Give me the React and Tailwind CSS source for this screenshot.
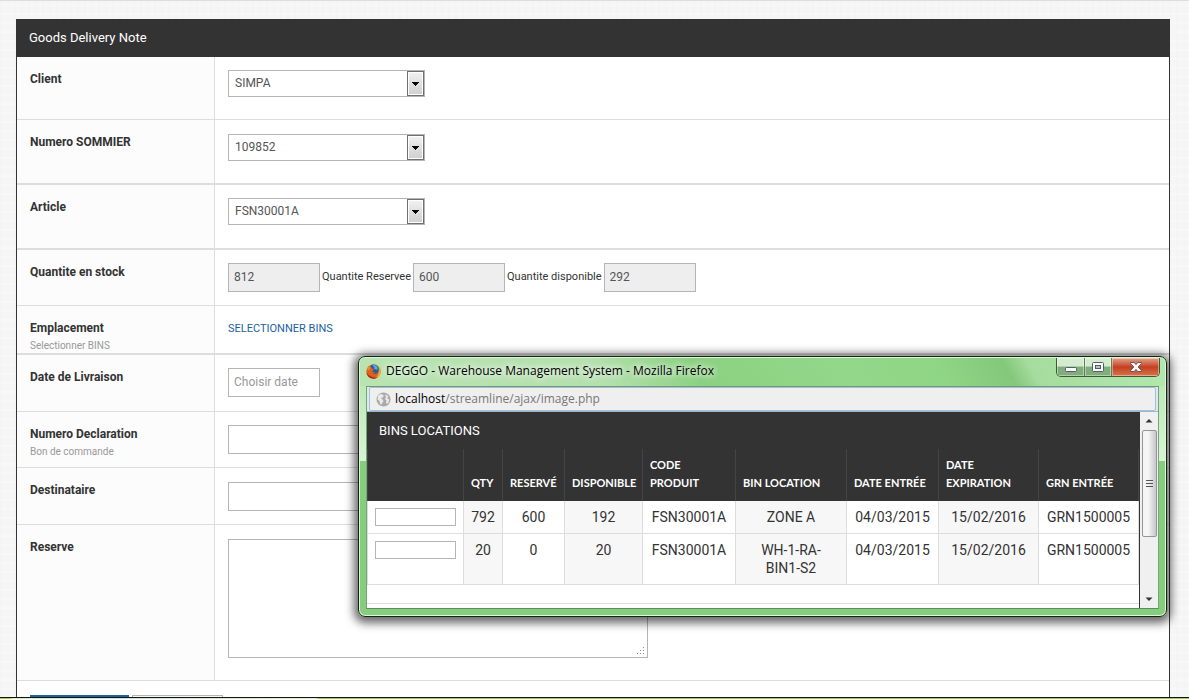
import React, { useState } from 'react';

const STOCK = [
  { qty: 792, reserved: 600, available: 192, code: 'FSN30001A', bin: 'ZONE A', entry: '04/03/2015', expiry: '15/02/2016', grn: 'GRN1500005' },
  { qty: 20, reserved: 0, available: 20, code: 'FSN30001A', bin: 'WH-1-RA-BIN1-S2', entry: '04/03/2015', expiry: '15/02/2016', grn: 'GRN1500005' },
];

const fieldBox = 'border border-[#b5b5b5] pb-[2px] text-[12px] text-[#555] outline-none placeholder:text-[#999]';

// One line of the form: label column on the left, control on the right.
function Row({ id, label, hint, rule = 'border-b', pad = 'py-[13px]', children }) {
  return (
    <div className={`flex border-[#dddddd] ${rule}`}>
      <div className="w-[198px] shrink-0 border-r border-[#dddddd] bg-[#fcfcfc] pl-[13px] pt-3">
        <label htmlFor={id} className="block text-[12px] leading-5 font-bold text-[#333]">{label}</label>
        {hint && <span className="block text-[10px] leading-[15px] text-[#999]">{hint}</span>}
      </div>
      <div className={`min-w-0 flex-1 px-[13px] ${pad}`}>{children}</div>
    </div>
  );
}

function Select({ id, options }) {
  return (
    <div className="relative w-[197px]">
      <select id={id} className={`block h-[27px] w-full appearance-none bg-white pl-[6px] ${fieldBox}`}>
        {options.map((o) => <option key={o}>{o}</option>)}
      </select>
      <span className="pointer-events-none absolute inset-y-px right-px flex w-[17px] items-center justify-center border border-[#707070] bg-linear-to-b from-[#f2f2f2] to-[#cfcfcf] ring-1 ring-inset ring-white">
        <svg width="7" height="4" viewBox="0 0 7 4" shapeRendering="crispEdges" aria-hidden="true"><path d="M0 0h7L3.5 4z" fill="#000" /></svg>
      </span>
    </div>
  );
}

function FirefoxIcon() {
  return (
    <svg width="15" height="15" viewBox="0 0 16 16" aria-hidden="true">
      <circle cx="8" cy="8" r="7.600" fill="#e2601c" />
      <path d="M9.500.6C13.400 1.400 16 4.600 15.700 8.600c-.3 3.700-3.300 6.600-6.900 6.900 3-1.500 4.600-3.900 4.600-7 0-3.200-1.500-5.500-3.900-7.900z" fill="#f5a623" />
      <path d="M4.800 1.600C7.500-.2 11.300.3 13 3.200c1.200 2.200.9 4.800-.9 6.300-1.500 1.200-3.700 1.300-5 .3 1.500.1 2.500-.3 3-1.200-1.300.5-2.600-.1-3.400-.9L8.500 5.600 6.200 4.800z" fill="#1f5f9f" />
      <path d="M6.800 1.300c2-.7 4.300 0 5.200 1.800.6 1.200.4 2.500-.2 3.500C11 5.300 9.500 5.600 8.500 5l.2-1.600z" fill="#4fb0e0" />
      <path d="M.5 9C.9 13 4.200 15.700 8 15.600c1.900 0 3.500-.6 4.700-1.600C8.500 15 3.400 13.600.5 9z" fill="#a92d14" />
      <path d="M1.200 4.300C2 3.800 2 2.600 2.800 1.800c.2 1 .9 1.500 2 1.600L4 5.500 2.200 7z" fill="#ef8a2a" />
    </svg>
  );
}

function GlobeIcon() {
  return (
    <svg width="15" height="15" viewBox="0 0 15 15" aria-hidden="true">
      <circle cx="7.500" cy="7.500" r="7" fill="#a9a9a9" />
      <path d="M2 3.500 4.500 2l2 .5L8 4 6.500 5.500 5 6l1.500 1.500 1 2L6 11l-.5 2L4 11.500 3.500 9 1.500 7.500z" fill="#e9e9e9" />
      <path d="m9 2.500 2 .5 1.500 2-1.500 1 2.200 1.500-.7 3-1.500 1.500L10 10.500l.5-2L9 7l1-2z" fill="#e9e9e9" />
    </svg>
  );
}

function WindowButtons() {
  return (
    <div className="flex h-[19px] overflow-hidden rounded-b-[5px] border border-t-0 border-[#3c5a3a]">
      <button aria-label="Minimize" className="flex w-[28px] items-center justify-center border-r border-[#5f7f5c] bg-linear-to-b from-[#d3ebcf] from-45% to-[#7fae7a] to-50% ring-1 ring-inset ring-white/40">
        <svg width="12" height="5" viewBox="0 0 12 5" className="mt-1"><rect x=".5" y=".5" width="11" height="4" rx="1" fill="#fff" stroke="#555d6b" /></svg>
      </button>
      <button aria-label="Maximize" className="flex w-[27px] items-center justify-center border-r border-[#5f7f5c] bg-linear-to-b from-[#d3ebcf] from-45% to-[#7fae7a] to-50% ring-1 ring-inset ring-white/40">
        <svg width="12" height="10" viewBox="0 0 12 10"><rect x=".5" y=".5" width="11" height="9" rx="1" fill="#fff" stroke="#555d6b" /><rect x="3.500" y="3.500" width="5" height="3" fill="#aecbab" stroke="#555d6b" /></svg>
      </button>
      <button aria-label="Close" className="flex w-[47px] items-center justify-center bg-linear-to-b from-[#e3a08c] from-0% via-[#c2401f] via-50% to-[#d8714a] ring-1 ring-inset ring-white/40">
        <svg width="12" height="10" viewBox="0 0 12 10"><path d="M.6.5h3.600L6 2.600 7.800.5h3.600v1L8.200 5l3.200 3.500v1H7.800L6 7.400 4.200 9.500H.6v-1L3.800 5 .6 1.500z" fill="#fff" stroke="#5a4a52" strokeWidth=".9" /></svg>
      </button>
    </div>
  );
}

function Scrollbar() {
  return (
    <div className="flex w-[18px] shrink-0 flex-col items-center bg-[#f0f0f0]" aria-hidden="true">
      <svg width="18" height="18" viewBox="0 0 18 18"><path d="M5.500 10.500 9 7l3.500 3.500z" fill="#333" /></svg>
      <div className="flex h-[107px] w-[15px] items-center justify-center rounded-[2px] border border-[#959595] bg-linear-to-r from-[#f5f5f5] from-40% to-[#c6c6cb]">
        <svg width="7" height="8" viewBox="0 0 7 8" shapeRendering="crispEdges"><path d="M0 .5h7M0 3.500h7M0 6.500h7" stroke="#555" /></svg>
      </div>
      <svg className="mt-auto" width="18" height="18" viewBox="0 0 18 18"><path d="M5.500 7.500 9 11l3.500-3.500z" fill="#333" /></svg>
    </div>
  );
}

function BinsTable() {
  const th = 'border-r border-[#444] px-[7px] pt-[7px] pb-[9px] text-left align-bottom font-bold';
  const cell = 'border-r border-b border-[#dddddd] py-[7px] text-center align-top';
  const td = `${cell} px-[7px]`;
  return (
    <table className="w-full table-fixed border-separate border-spacing-0">
      <colgroup>
        <col className="w-[97px]" /><col className="w-[39px]" /><col className="w-[62px]" />
        <col className="w-[78px]" /><col className="w-[93px]" /><col className="w-[111px]" />
        <col className="w-[92px]" /><col className="w-[100px]" /><col />
      </colgroup>
      <thead className="bg-[#333] font-['Lato',sans-serif] text-[11px] leading-[18px] text-white">
        <tr>
          <th className={`border-l ${th}`} aria-label="Quantite" />
          <th className={th}>QTY</th>
          <th className={th}>RESERVÉ</th>
          <th className={th}>DISPONIBLE</th>
          <th className={th}>CODE<br />PRODUIT</th>
          <th className={th}>BIN LOCATION</th>
          <th className={th}>DATE ENTRÉE</th>
          <th className={th}>DATE<br />EXPIRATION</th>
          <th className={th}>GRN ENTRÉE</th>
        </tr>
      </thead>
      <tbody className="text-[14px] leading-[18px] text-[#333]">
        {STOCK.map((s) => (
          <tr key={s.bin}>
            <td className={`border-l ${td}`}>
              <input aria-label={`Quantite ${s.bin}`} className={`block h-[18px] w-[81px] bg-white px-1 ${fieldBox}`} />
            </td>
            <td className={`bg-[#f7f7f7] ${td}`}>{s.qty}</td>
            <td className={td}>{s.reserved}</td>
            <td className={`bg-[#f7f7f7] ${td}`}>{s.available}</td>
            <td className={td}>{s.code}</td>
            <td className={`bg-[#f7f7f7] px-3 ${cell}`}>{s.bin}</td>
            <td className={td}>{s.entry}</td>
            <td className={`bg-[#f7f7f7] ${td}`}>{s.expiry}</td>
            <td className={td}>{s.grn}</td>
          </tr>
        ))}
      </tbody>
    </table>
  );
}

// Popup browser window that floats over the form.
function BinsWindow() {
  return (
    <section className="absolute top-[355px] left-[358px] w-[809px] rounded-[7px] border border-[#14240f] bg-linear-to-b from-[#b4e4ad] from-0% via-[#d9f3d5] via-40% to-[#87cd7f] to-40% px-[7px] pb-[7px] shadow-[0_2px_10px_4px_rgba(0,0,0,0.6)] ring-1 ring-inset ring-[#dcf7d8]">
      <div className="-mx-[6px] mt-px flex h-[28px] items-start justify-between rounded-t-[5px] bg-[linear-gradient(60deg,#b9e4b2_0%,#b5e0ae_30%,#8bd182_42%,#93d88a_60%,#8fd586_72%,#84c87b_80%,#a5dd9e_83%,#b4e8ae_100%)] pl-[6px]">
        <div className="flex items-center gap-[5px] pt-[5px]">
          <FirefoxIcon />
          <h2 className="font-['Open_Sans',sans-serif] text-[12px] leading-4 text-black [text-shadow:0_0_8px_#fff,0_0_6px_#fff]">
            DEGGO - Warehouse Management System - Mozilla Firefox
          </h2>
        </div>
        <div className="pr-[5px]"><WindowButtons /></div>
      </div>

      <div className="border border-t-[#6e9a72] border-r-[#6fa873] border-b-[#5a8f55] border-l-[#6fa873]">
        <div className="border-b border-[#9db5cb] bg-[#dce8f5] px-[2px]">
          <div className="flex h-[24px] items-center gap-[4px] rounded-[2px] border border-[#a9bfd6] bg-[#efefef] pl-[6px] font-['Open_Sans',sans-serif] text-[12px] text-[#777]">
            <GlobeIcon />
            <span><span className="text-black">localhost</span>/streamline/ajax/image.php</span>
          </div>
        </div>
        <div className="flex">
          <div className="min-w-0 flex-1 border-r border-[#333] bg-white">
            <h3 className="bg-[#333] px-3 py-[9px] text-[13px] leading-[19px] text-white">BINS LOCATIONS</h3>
            <BinsTable />
            <div className="mb-1 h-[19px] border-b border-[#dddddd]" />
          </div>
          <Scrollbar />
        </div>
      </div>
    </section>
  );
}

export default function App() {
  const [date, setDate] = useState('');
  const [note, setNote] = useState('');

  return (
    <div className="relative flex h-screen flex-col overflow-hidden border-t border-[#dddddd] bg-[#f6f6f6] bg-[repeating-linear-gradient(90deg,rgba(0,0,0,0.008)_0px,rgba(0,0,0,0.008)_2px,transparent_2px,transparent_7px),repeating-linear-gradient(0deg,rgba(255,255,255,0.25)_0px,rgba(255,255,255,0.25)_2px,transparent_2px,transparent_9px)] font-['Roboto',sans-serif]">
      <form className="mt-[18px] mr-[19px] ml-4 flex-1 border-x border-[#333] bg-white" onSubmit={(e) => e.preventDefault()}>
        <h1 className="bg-[#333] px-3 py-[9px] text-[13px] leading-5 text-white">Goods Delivery Note</h1>

        <Row id="client" label="Client" pad="pt-[13px] pb-[22px]">
          <Select id="client" options={['SIMPA']} />
        </Row>
        <Row id="sommier" label="Numero SOMMIER" rule="border-b-2" pad="pt-[14px] pb-[22px]">
          <Select id="sommier" options={['109852']} />
        </Row>
        <Row id="article" label="Article" rule="border-b-2" pad="pt-[13px] pb-[23px]">
          <Select id="article" options={['FSN30001A']} />
        </Row>
        <Row id="stock" label="Quantite en stock">
          <div className="flex items-center gap-[2px] text-[11px] text-[#333]">
            <input id="stock" readOnly value="812" className={`h-[29px] w-[92px] bg-[#eee] px-[5px] ${fieldBox}`} />
            <label htmlFor="reserved">Quantite Reservee</label>
            <input id="reserved" readOnly value="600" className={`h-[29px] w-[92px] bg-[#eee] px-[5px] ${fieldBox}`} />
            <label htmlFor="available">Quantite disponible</label>
            <input id="available" readOnly value="292" className={`h-[29px] w-[92px] bg-[#eee] px-[5px] ${fieldBox}`} />
          </div>
        </Row>
        <Row id="bins" label="Emplacement" hint="Selectionner BINS" rule="border-b-2" pad="pt-[13px] pb-[14px]">
          <a id="bins" href="#bins" className="block text-[11px] leading-5 text-[#1d5f9f]">SELECTIONNER BINS</a>
        </Row>
        <Row id="date" label="Date de Livraison" pad="pt-[13px] pb-[14px]">
          <input id="date" placeholder="Choisir date" value={date} onChange={(e) => setDate(e.target.value)} className={`block h-[29px] w-[92px] bg-white px-[5px] ${fieldBox}`} />
        </Row>
        <Row id="declaration" label="Numero Declaration" hint="Bon de commande">
          <input id="declaration" className={`block h-[29px] w-[420px] bg-white px-[5px] ${fieldBox}`} />
        </Row>
        <Row id="dest" label="Destinataire" pad="pt-[14px] pb-[13px]">
          <input id="dest" className={`block h-[29px] w-[420px] bg-white px-[5px] ${fieldBox}`} />
        </Row>
        <Row id="note" label="Reserve" pad="pt-[14px] pb-[22px]">
          <div className="relative w-[420px]">
            <textarea id="note" value={note} onChange={(e) => setNote(e.target.value)} className={`block h-[119px] w-full resize-none bg-white px-[5px] pt-1 ${fieldBox}`} />
            <svg className="pointer-events-none absolute right-[3px] bottom-[3px]" width="8" height="8" viewBox="0 0 8 8" shapeRendering="crispEdges" aria-hidden="true">
              <path d="M6 0h1v1H6zM6 3h1v1H6zM3 3h1v1H3zM6 6h1v1H6zM3 6h1v1H3zM0 6h1v1H0z" fill="#888" />
            </svg>
          </div>
        </Row>
        <div className="flex gap-[3px] px-[13px] pt-[14px]">
          <button type="submit" aria-label="Enregistrer" className="h-[29px] w-[99px] bg-[#1f609f]" />
          <button type="reset" aria-label="Annuler" className="h-[29px] w-[91px] border border-[#b5b5b5] bg-[#f7f7f7]" />
        </div>
      </form>

      <BinsWindow />

      {/* top edge of the desktop taskbar */}
      <div className="absolute inset-x-0 bottom-0 h-[2px] border-t border-[#101a05] bg-[linear-gradient(90deg,#a9c957_0px,#a9c957_11px,#d6e6c0_12px,#cfe0dc_130px,#e2ecd0_316px,#a9c957_318px)]" />
    </div>
  );
}
